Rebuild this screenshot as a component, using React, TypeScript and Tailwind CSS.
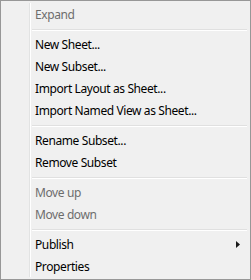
import React from 'react'

type Item = { label?: string; disabled?: boolean; sub?: boolean; sep?: boolean }

const items: Item[] = [
  { label: 'Expand', disabled: true },
  { sep: true },
  { label: 'New Sheet...' },
  { label: 'New Subset...' },
  { label: 'Import Layout as Sheet...' },
  { label: 'Import Named View as Sheet...' },
  { sep: true },
  { label: 'Rename Subset...' },
  { label: 'Remove Subset' },
  { sep: true },
  { label: 'Move up', disabled: true },
  { label: 'Move down', disabled: true },
  { sep: true },
  { label: 'Publish', sub: true },
  { label: 'Properties' },
]

function Gutter() {
  return <div className="w-[27px] shrink-0 self-stretch border-r border-r-[#e2e3e3] shadow-[1px_0_0_#ffffff]" />
}

export default function App() {
  return (
    <div
      className="h-[280px] w-[251px] border border-[#979797] bg-[#f0f0f0] p-[2px] text-[12px]"
      style={{ fontFamily: '"Noto Sans", "Liberation Sans", sans-serif' }}
    >
      <div className="flex flex-col">
        {items.map((it, i) =>
          it.sep ? (
            <div key={i} className="flex h-[8px]">
              <Gutter />
              <div className="ml-[2px] mr-[1px] flex-1 pt-[4px]">
                <div className="h-px bg-[#e0e0e0]" />
                <div className="h-px bg-white" />
              </div>
            </div>
          ) : (
            <div key={i} className="flex h-[22px] items-center">
              <Gutter />
              <span
                className={
                  'ml-[5px] mt-[1px] flex-1 leading-none tracking-[-0.4px] ' +
                  (it.disabled ? 'text-[#6d6d6d]' : 'text-black')
                }
              >
                {it.label}
              </span>
              {it.sub && (
                <svg width="4" height="7" viewBox="0 0 4 7" className="mr-[8px]">
                  <path d="M0 0 L4 3.5 L0 7 Z" fill="#1a1a1a" />
                </svg>
              )}
            </div>
          )
        )}
      </div>
    </div>
  )
}
